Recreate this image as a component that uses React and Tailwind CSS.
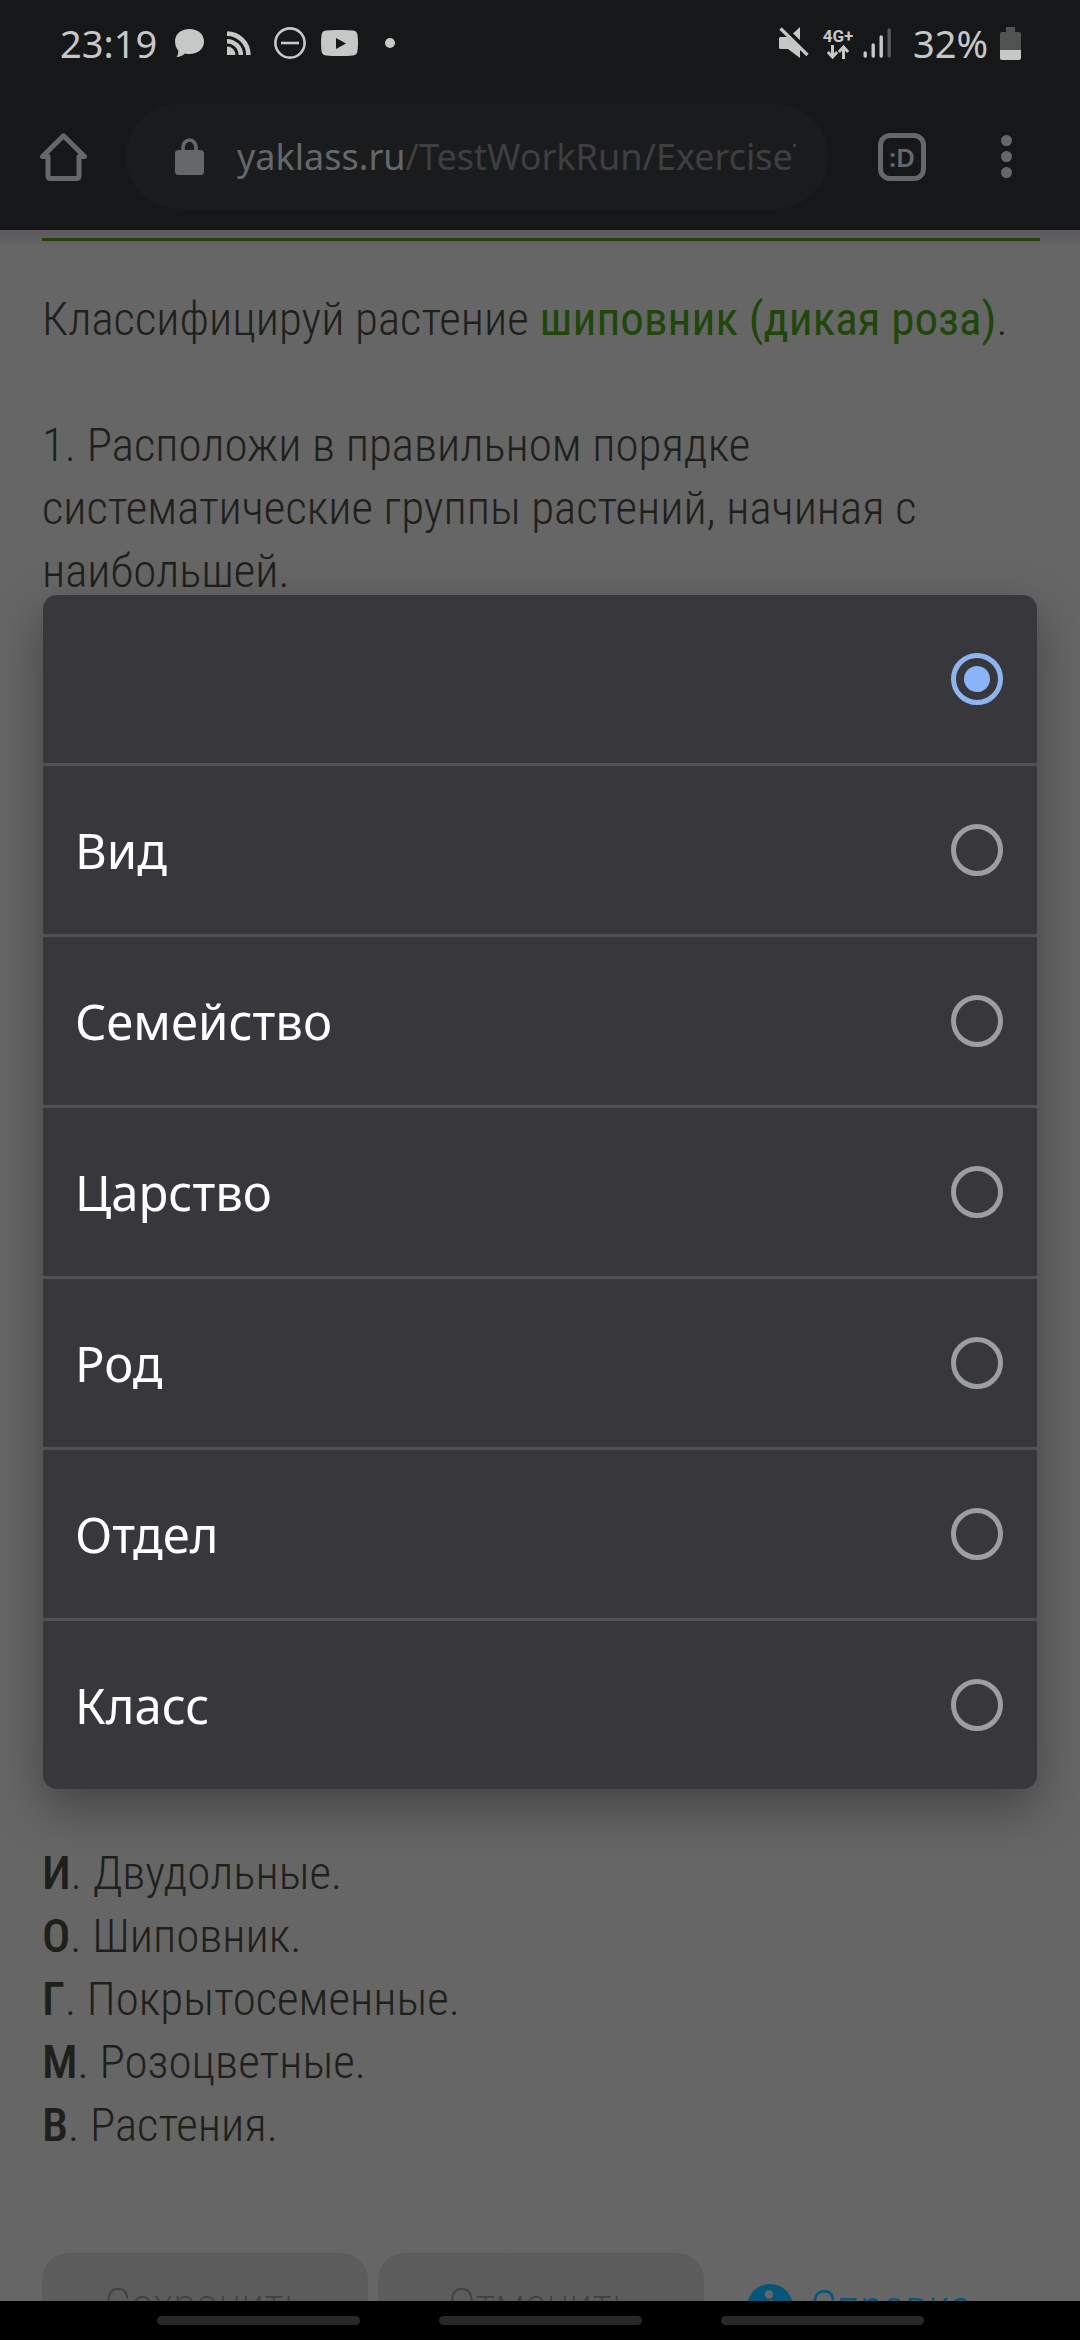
import React, { useState } from "react";

const options = ["", "Вид", "Семейство", "Царство", "Род", "Отдел", "Класс"];

const answers = [
  { letter: "И", text: "Двудольные" },
  { letter: "О", text: "Шиповник" },
  { letter: "Г", text: "Покрытосеменные" },
  { letter: "М", text: "Розоцветные" },
  { letter: "В", text: "Растения" },
];

const StatusBar = () => (
  <div className="flex h-[86px] items-center justify-between pl-[60px] pr-[59px] font-['Noto_Sans',sans-serif] text-[38px] leading-[56px] text-[#c6c7c7]">
    <div className="flex items-center">
      <span className="w-[97px]">23:19</span>
      <svg className="ml-[18px] h-[28px] w-[29px]" viewBox="0 0 29 28" fill="currentColor">
        <path d="M14.500 0C23 0 29 5 29 12.500S23 25 14.500 25c-1.500 0-3-.2-4.500-.6C7.500 26.500 5 28 1.500 28 3 26 3.500 23.500 3.200 21.500 1.200 19.200 0 16 0 12.500 0 5 6 0 14.500 0z" />
      </svg>
      <svg className="ml-[23px] h-[24px] w-[24px]" viewBox="0 0 24 24" fill="none" stroke="currentColor" strokeWidth="4.600">
        <path d="M0 2.600A21.400 21.400 0 0 1 21.400 24M0 10.200A13.800 13.800 0 0 1 13.800 24" />
        <path d="M0 15.500A8.500 8.500 0 0 1 8.500 24H0z" fill="currentColor" stroke="none" />
      </svg>
      <svg className="ml-[23px] h-[32px] w-[32px]" viewBox="0 0 32 32" fill="none" stroke="currentColor" strokeWidth="2.600">
        <circle cx="16" cy="16" r="14.600" />
        <path d="M7 16h18" />
      </svg>
      <svg className="ml-[15px] h-[26px] w-[37px]" viewBox="0 0 37 26">
        <path d="M5 .5Q18.500-.6 32 .5 36 .8 36.500 5q1 8 0 16-.5 4-4.500 4.500-13.500 1-27 0Q1 25 .5 21q-1-8 0-16Q1 .8 5 .5z" fill="currentColor" />
        <path d="M15 8v11l10-5.500z" fill="#161719" />
      </svg>
      <span className="ml-[27px] h-[10px] w-[10px] rounded-full bg-[#c6c7c7]" />
    </div>
    <div className="flex items-center">
      <svg className="h-[32px] w-[30px]" viewBox="0 0 30 32" fill="currentColor">
        <path d="M21 0v13l-7-6.500zM1.500 10H8l13 12v9L9 22H1.500Q0 22 0 20.500v-9Q0 10 1.500 10z" />
        <path d="M1.500 1.500l27 26.500" stroke="currentColor" strokeWidth="3.200" />
      </svg>
      <div className="ml-[13px] flex w-[32px] flex-col items-center font-['Roboto',sans-serif]">
        <span className="text-[17px] font-bold leading-[18px]">4G+</span>
        <svg className="h-[14px] w-[22px]" viewBox="0 0 22 14" fill="none" stroke="currentColor" strokeWidth="3">
          <path d="M5.500 0v12M.8 7l4.700 5 4.700-5M16.500 14V2M11.800 7l4.700-5 4.700 5" />
        </svg>
      </div>
      <svg className="ml-[9px] h-[30px] w-[28px]" viewBox="0 0 28 30" strokeWidth="3.400" strokeLinecap="round">
        <path d="M2.200 25v3M10.200 17v11M18.200 9v19" stroke="currentColor" />
        <path d="M26.200 2v26" stroke="#57585a" />
      </svg>
      <span className="ml-[22px] w-[77px] whitespace-nowrap">32%</span>
      <svg className="ml-[10px] h-[33px] w-[21px]" viewBox="0 0 21 33">
        <path d="M6 0h9v5h4q2 0 2 2v16H0V7q0-2 2-2h4z" fill="#515252" />
        <path d="M0 23h21v8q0 2-2 2H2q-2 0-2-2z" fill="currentColor" />
      </svg>
    </div>
  </div>
);

const Toolbar = () => (
  <div className="flex items-center pb-[21px] pl-10 pr-[68px] pt-[18px] text-[#66676a]">
    <button aria-label="Главная страница" className="shrink-0">
      <svg className="h-[48px] w-[47px]" viewBox="0 0 47 48" fill="none" stroke="currentColor" strokeWidth="5" strokeLinejoin="round" strokeLinecap="round">
        <path d="M2.500 23.500L23.500 2.800 44.500 23.500H39V43q0 2.500-2.500 2.500h-26Q8 45.500 8 43V23.500z" />
      </svg>
    </button>
    <button className="ml-[39px] flex h-[105px] min-w-0 flex-1 items-center rounded-full bg-[#1a1b1d] pl-[49px] pr-8 text-left">
      <svg className="h-[37px] w-[29px] shrink-0" viewBox="0 0 29 37">
        <path d="M8 14V9.500a6.500 7.500 0 0 1 13 0V14" fill="none" stroke="currentColor" strokeWidth="3.600" />
        <rect y="12" width="29" height="25" rx="3.500" fill="currentColor" />
      </svg>
      <span className="ml-[33px] overflow-hidden whitespace-nowrap font-['Noto_Sans',sans-serif] text-[36px] text-[#3e3f41]">
        <span className="text-[#66676a]">yaklass.ru</span>/TestWorkRun/ExerciseT
      </span>
    </button>
    <button className="ml-[50px] flex h-[48px] w-[48px] shrink-0 items-center justify-center rounded-[12px] border-[5px] border-[#66676a] font-['Noto_Sans',sans-serif] text-[26px] font-semibold leading-none">
      :D
    </button>
    <button aria-label="Меню" className="ml-[75px] flex shrink-0 flex-col gap-[5px]">
      <span className="h-[11px] w-[11px] rounded-full bg-[#66676a]" />
      <span className="h-[11px] w-[11px] rounded-full bg-[#66676a]" />
      <span className="h-[11px] w-[11px] rounded-full bg-[#66676a]" />
    </button>
  </div>
);

const Exercise = () => (
  <main className="min-h-0 flex-1 overflow-hidden bg-[#666666] bg-linear-to-b from-[#5c595c] to-[#666666] to-[18px] pl-[42px] pr-10 pt-2 font-['Roboto_Condensed','Roboto',sans-serif] text-[47px] font-light leading-[63px] text-[#1f1f1c]">
    <hr className="border-t-[3px] border-[#24400f]" />
    <p className="mt-[46px] whitespace-nowrap">
      Классифицируй растение{" "}
      <strong className="font-normal text-[#1f470b]">шиповник (дикая роза)</strong>.
    </p>
    <p className="mt-[63px]">
      1. Расположи в правильном порядке
      <br />
      систематические группы растений, начиная с<br />
      наибольшей.
    </p>
    <ul className="mt-[1239px]">
      {answers.map((answer) => (
        <li key={answer.letter}>
          <b className="font-medium">{answer.letter}</b>. {answer.text}.
        </li>
      ))}
    </ul>
    <div className="mt-[97px] flex items-start">
      <button className="h-[102px] w-[326px] rounded-[27px] bg-[#5c5c5c] font-extralight text-[#404040]">
        Сохранить
      </button>
      <button className="ml-[10px] h-[102px] w-[326px] rounded-[27px] bg-[#5c5c5c] font-extralight text-[#404040]">
        Отменить
      </button>
      <a href="#help" className="ml-[43px] mt-[31px] flex gap-[17px] leading-[46px] text-[#06567a]">
        <svg className="h-[46px] w-[46px]" viewBox="0 0 46 46">
          <circle cx="23" cy="23" r="23" fill="#06567a" />
          <circle cx="22" cy="10.500" r="4.200" fill="#666666" />
          <path d="M17 19q4-3 9-3l-4 19 4-1-1 3q-9 4-8-3l3-12z" fill="#666666" />
        </svg>
        Справка
      </a>
    </div>
  </main>
);

const SelectDialog = ({ value, onChange }) => (
  <div className="fixed inset-0 flex items-center px-[43px] pb-[39px] pt-[83px]">
    <div
      role="dialog"
      aria-label="Выбор группы"
      className="w-full divide-y-[3px] divide-[#525156] overflow-hidden rounded-[14px] bg-[#38373b] shadow-[0_18px_50px_rgba(0,0,0,0.35)]"
    >
      {options.map((option) => (
        <label
          key={option}
          className="flex items-center justify-between pl-8 pr-[34px] font-['Noto_Sans',sans-serif] text-[49px] leading-[168px] text-white"
        >
          <span className="min-h-[168px]">{option}</span>
          <input
            type="radio"
            name="group"
            aria-label={option || "Не выбрано"}
            checked={value === option}
            onChange={() => onChange(option)}
            className="h-[52px] w-[52px] appearance-none rounded-full border-[5px] border-[#9b9fa1] bg-clip-content p-2 checked:border-[#8fb5f0] checked:bg-[#8ab4f8]"
          />
        </label>
      ))}
    </div>
  </div>
);

const NavigationBar = () => (
  <nav className="relative z-10 flex h-[39px] shrink-0 justify-center gap-[79px] bg-black pt-[15px]">
    <button aria-label="Недавние" className="h-[9px] w-[203px] rounded-full bg-[#282828]" />
    <button aria-label="Домой" className="h-[9px] w-[203px] rounded-full bg-[#282828]" />
    <button aria-label="Назад" className="h-[9px] w-[203px] rounded-full bg-[#282828]" />
  </nav>
);

const App = () => {
  const [value, setValue] = useState("");

  return (
    <div className="flex h-screen flex-col overflow-hidden">
      <header className="shrink-0 bg-[#161719]">
        <StatusBar />
        <Toolbar />
      </header>
      <Exercise />
      <SelectDialog value={value} onChange={setValue} />
      <NavigationBar />
    </div>
  );
};

export default App;
